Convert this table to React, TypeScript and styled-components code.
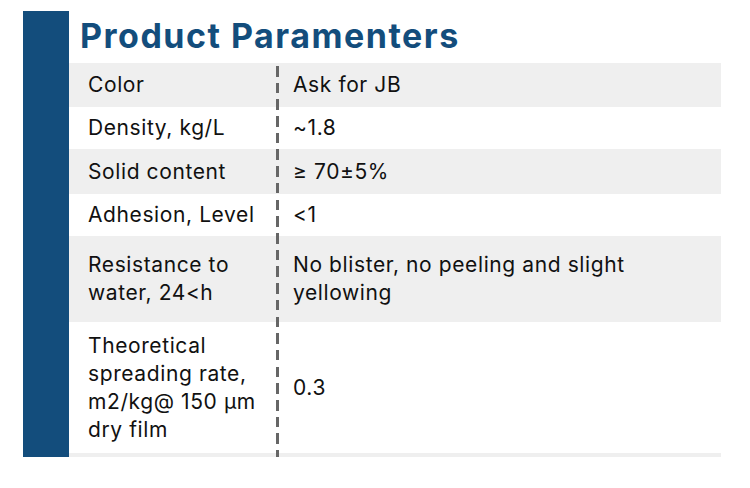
import React from "react";
import styled, { createGlobalStyle } from "styled-components";

const GlobalStyle = createGlobalStyle`
  html, body {
    margin: 0;
    padding: 0;
    background: #ffffff;
  }
  body {
    font-family: Inter, "Open Sans", Arial, sans-serif;
    color: #111111;
  }
`;

const Page = styled.div`
  padding: 11px 0 0 23px;
`;

const Section = styled.section`
  display: flex;
  width: 698px;
  height: 446px;
  overflow: hidden;
`;

const Bar = styled.div`
  flex: 0 0 46px;
  background: #134d7c;
`;

const Content = styled.div`
  flex: 1;
  display: flex;
  flex-direction: column;
`;

const Title = styled.h2`
  flex: 0 0 52px;
  margin: 0;
  padding-left: 11px;
  font-size: 34px;
  line-height: 50px;
  letter-spacing: 1.5px;
  font-weight: 700;
  color: #134d7c;
`;

const Table = styled.div`
  position: relative;

  &::before {
    content: "";
    position: absolute;
    top: 3px;
    bottom: 0;
    left: 207px;
    width: 2.5px;
    background: repeating-linear-gradient(
      to bottom,
      #666666 0 10.5px,
      transparent 10.5px 16.7px
    );
  }
`;

const Row = styled.div<{ $h: number; $shade: boolean }>`
  display: grid;
  grid-template-columns: 208px 1fr;
  align-items: center;
  height: ${p => p.$h}px;
  background: ${p => (p.$shade ? "#efefef" : "#ffffff")};
`;

const Cell = styled.div`
  font-size: 21px;
  line-height: 28px;
  letter-spacing: 0.6px;
`;

const Label = styled(Cell)`
  padding: 0 4px 0 19px;
`;

const Value = styled(Cell)`
  padding: 0 20px 0 16px;
`;

const rows: { label: React.ReactNode; value: React.ReactNode; h: number }[] = [
  { label: "Color", value: "Ask for JB", h: 44 },
  { label: "Density, kg/L", value: "~1.8", h: 42 },
  { label: "Solid content", value: "≥ 70±5%", h: 45 },
  { label: "Adhesion, Level", value: "<1", h: 42 },
  {
    label: "Resistance to water, 24<h",
    value: "No blister, no peeling and slight yellowing",
    h: 86,
  },
  {
    label: (
      <>
        Theoretical
        <br />
        spreading rate,
        <br />
        m2/kg@ 150 μm
        <br />
        dry film
      </>
    ),
    value: "0.3",
    h: 131,
  },
  { label: "", value: "", h: 44 },
];

export default function App() {
  return (
    <>
      <GlobalStyle />
      <Page>
        <Section>
          <Bar />
          <Content>
            <Title>Product Paramenters</Title>
            <Table>
              {rows.map((r, i) => (
                <Row key={i} $h={r.h} $shade={i % 2 === 0}>
                  <Label>{r.label}</Label>
                  <Value>{r.value}</Value>
                </Row>
              ))}
            </Table>
          </Content>
        </Section>
      </Page>
    </>
  );
}
